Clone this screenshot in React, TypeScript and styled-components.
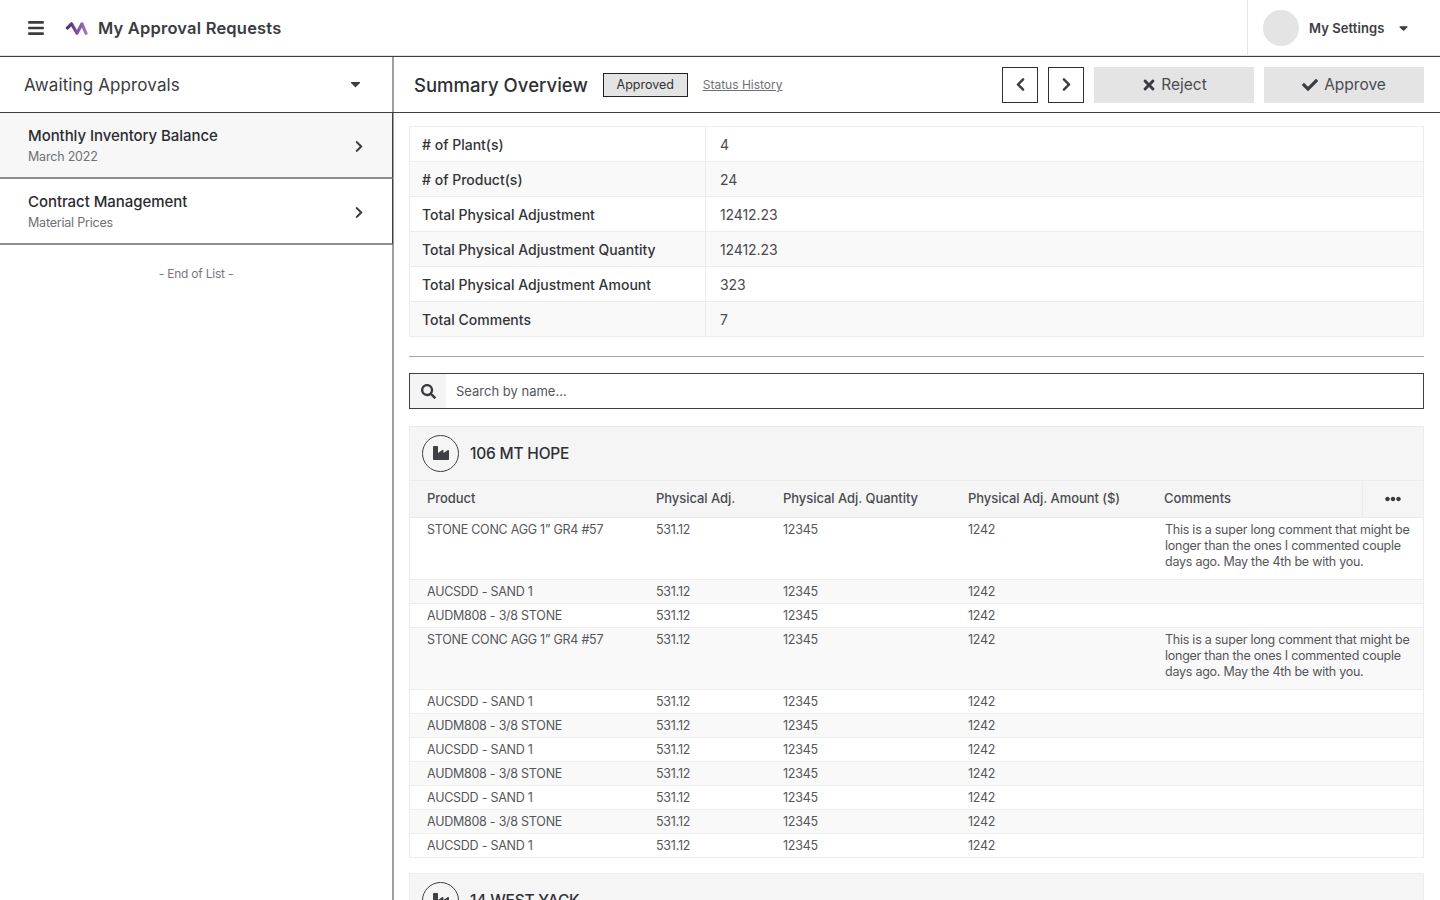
import React from "react";
import styled, { createGlobalStyle } from "styled-components";
import { FaBars, FaCaretDown, FaChevronLeft, FaChevronRight, FaTimes, FaCheck, FaSearch, FaIndustry, FaEllipsisH } from "react-icons/fa";

const Global = createGlobalStyle`
  html, body { margin: 0; padding: 0; height: 100%; overflow: hidden; background: #fff; }
  body { font-family: "Inter", "Open Sans", sans-serif; color: #3b3c42; font-variant-numeric: proportional-nums; }
  * { box-sizing: border-box; }
`;

const Page = styled.div`
  width: 1440px; height: 900px; display: flex; flex-direction: column; overflow: hidden;
`;
const TopBar = styled.header`
  height: 57px; flex: none; display: flex; align-items: center; border-bottom: 1px solid #3f4046;
  box-shadow: inset 0 -1px 0 #e2e2e2;
`;
const MenuButton = styled.div`
  width: 28px; margin-left: 28px; display: flex; color: #3b3c42; font-size: 16px;
  svg { width: 16px; height: 18px; }
`;
const Logo = styled.svg`
  width: 23px; height: 15px; margin-left: 9px; flex: none;
`;
const AppTitle = styled.h1`
  margin: 0 0 0 10px; font-size: 16.5px; font-weight: 600; color: #3b3c42; flex: 1; letter-spacing: 0.2px;
`;
const Settings = styled.div`
  width: 193px; height: 56px; display: flex; align-items: center; padding-left: 15px;
  border-left: 1px solid #e6e6e6; font-size: 13px; font-weight: 600; color: #3b3c42; letter-spacing: 0.08px;
`;
const Avatar = styled.div`
  width: 36px; height: 36px; border-radius: 50%; background: #e4e4e4; margin-right: 10px;
`;
const SmallCaret = styled.span`
  display: flex; margin-left: 14px; svg { width: 11px; height: 14px; }
`;
const Body = styled.div`
  flex: 1; display: flex; min-height: 0;
`;
const Sidebar = styled.aside`
  width: 394px; flex: none; border-right: 2px solid #a0a0a0;
`;
const SideHeader = styled.div`
  height: 56px; display: flex; align-items: center; justify-content: space-between; padding: 0 32px 0 24px;
  border-bottom: 1px solid #3f4046; font-size: 17px; font-weight: 400; color: #3b3c42; letter-spacing: 0.12px;
  margin-right: -2px;
  svg { width: 13px; height: 16px; margin-top: -2px; }
`;
const SideItem = styled.div<{ $active?: boolean }>`
  height: 66px; padding: 0 28px; display: flex; align-items: center; justify-content: space-between;
  background: ${(p) => (p.$active ? "#f7f7f7" : "#fff")};
  border-bottom: 2px solid #8e8e8e; border-right: 1px solid #3f4046; margin-right: -1px;
  svg { width: 10px; height: 13px; color: #3b3c42; margin-top: 2px; }
`;
const ItemTitle = styled.div`
  font-size: 15px; font-weight: 500; color: #2b2c30; letter-spacing: -0.06px; line-height: 20px; margin-top: 1px;
`;
const ItemSub = styled.div`
  font-size: 12.5px; color: #707074; margin-top: 2px; line-height: 18px; letter-spacing: -0.2px;
`;
const EndOfList = styled.div`
  text-align: center; font-size: 12px; color: #77777b; margin-top: 21px; line-height: 16px; letter-spacing: -0.22px;
`;
const Main = styled.main`
  flex: 1; min-width: 0; display: flex; flex-direction: column;
`;
const Toolbar = styled.div`
  height: 56px; flex: none; display: flex; align-items: center; padding: 0 16px 0 20px;
  border-bottom: 1px solid #3f4046;
`;
const ToolTitle = styled.h2`
  margin: 0; font-size: 18.5px; font-weight: 500; color: #2f3035; letter-spacing: 0.02px;
`;
const StatusBadge = styled.div`
  width: 85px; height: 24px; margin-left: 15px; border: 1px solid #222; background: #e4e4e4;
  display: flex; align-items: center; justify-content: center; font-size: 12.5px; color: #333;
`;
const HistoryLink = styled.a`
  margin-left: 15px; font-size: 12px; color: #707074; text-decoration: underline; flex: 1;
`;
const NavButton = styled.div`
  width: 36px; height: 36px; border: 1px solid #2f3035; display: flex; align-items: center; justify-content: center;
  margin-right: 10px; color: #3b3c42;
  svg { width: 11px; height: 15px; margin-left: 1px; }
`;
const ActionButton = styled.div<{ $gap: number }>`
  width: 160px; height: 36px; background: #e4e4e4; display: flex; align-items: center; justify-content: center;
  gap: ${(p) => p.$gap}px; font-size: 15.5px; color: #4a4b50;
  & + & { margin-left: 10px; }
  svg { color: #3b3c42; width: 16px; height: 16px; }
`;
const Content = styled.div`
  flex: 1; min-height: 0; overflow: hidden; padding: 13px 16px 0 15px;
`;
const SummaryTable = styled.div`
  border: 1px solid #ececec; border-bottom: 0;
`;
const SummaryRow = styled.div<{ $shade?: boolean }>`
  height: 35px; display: flex; align-items: center; border-bottom: 1px solid #ececec; font-size: 14px;
  background: ${(p) => (p.$shade ? "#f9f9f9" : "#fff")};
`;
const SummaryLabel = styled.div`
  width: 296px; height: 100%; display: flex; align-items: center; padding-left: 12px; border-right: 1px solid #ececec;
  font-weight: 500; color: #333438;
`;
const SummaryValue = styled.div`
  padding-left: 14px; color: #4a4b50; letter-spacing: -0.1px;
`;
const Divider = styled.hr`
  margin: 19px 0 16px; border: 0; border-top: 1px solid #a8a8a8;
`;
const SearchBox = styled.div`
  height: 36px; border: 1px solid #3f4046; display: flex; align-items: stretch; margin-bottom: 17px;
`;
const SearchIcon = styled.div`
  width: 36px; background: #f4f4f4; display: flex; align-items: center; justify-content: center;
  svg { width: 15px; height: 15px; color: #3b3c42; }
`;
const SearchText = styled.div`
  padding-left: 10px; display: flex; align-items: center; font-size: 13px; color: #55565a;
`;
const Card = styled.section`
  border: 1px solid #ececec; margin-bottom: 15px;
`;
const CardHeader = styled.div`
  height: 54px; background: #f5f5f5; display: flex; align-items: center; padding-left: 12px;
  border-bottom: 1px solid #ececec;
`;
const PlantIcon = styled.div`
  width: 37px; height: 37px; border: 1px solid #3f4046; border-radius: 50%; display: flex; align-items: center; justify-content: center;
  svg { width: 16px; height: 16px; color: #3f4046; margin-top: -1px; }
`;
const PlantName = styled.div`
  margin-left: 11px; font-size: 15.5px; font-weight: 500; color: #2f3035; letter-spacing: -0.2px;
`;
const columns = "229px 127px 185px 196px 1fr";
const HeadRow = styled.div`
  height: 37px; display: grid; grid-template-columns: ${columns}; align-items: center; padding: 0 0 2px 17px;
  background: #f5f5f5; border-bottom: 1px solid #ececec; font-size: 13px; font-weight: 500; color: #4a4b50; letter-spacing: -0.05px;
`;
const CommentHead = styled.div`
  display: flex; height: 36px; margin-bottom: -2px; align-items: center; justify-content: space-between;
`;
const CommentLabel = styled.span`
  margin-top: -2px;
`;
const MoreCell = styled.div`
  width: 61px; height: 100%; display: flex; align-items: center; justify-content: center; border-left: 1px solid #ececec;
  svg { width: 16px; height: 16px; color: #3b3c42; }
`;
const Row = styled.div<{ $shade?: boolean; $tall?: boolean }>`
  display: grid; grid-template-columns: ${columns}; padding-left: 17px; padding-top: 4px;
  height: ${(p) => (p.$tall ? "62px" : "24px")};
  background: ${(p) => (p.$shade ? "#f9f9f9" : "#fff")};
  border-bottom: 1px solid #ececec; font-size: 12.5px; line-height: 16px; color: #55565a; letter-spacing: -0.25px;
  &:last-child { border-bottom: 0; height: 23px; }
`;
const Comment = styled.div`
  padding-left: 1px; padding-right: 4px;
`;

const summary: [string, string][] = [
  ["# of Plant(s)", "4"],
  ["# of Product(s)", "24"],
  ["Total Physical Adjustment", "12412.23"],
  ["Total Physical Adjustment Quantity", "12412.23"],
  ["Total Physical Adjustment Amount", "323"],
  ["Total Comments", "7"],
];
const longComment = "This is a super long comment that might be longer than the ones I commented couple days ago. May the 4th be with you.";
const STONE = "STONE CONC AGG 1” GR4 #57";
const SAND = "AUCSDD - SAND 1";
const AUDM = "AUDM808 - 3/8 STONE";
const rows = [STONE, SAND, AUDM, STONE, SAND, AUDM, SAND, AUDM, SAND, AUDM, SAND];

export default function App() {
  return (
    <Page>
      <Global />
      <TopBar>
        <MenuButton><FaBars /></MenuButton>
        <Logo viewBox="0 0 23 15">
          <defs>
            <linearGradient id="lg" x1="0" x2="1" y1="0" y2="0">
              <stop offset="0" stopColor="#4b2a78" />
              <stop offset="1" stopColor="#a874bc" />
            </linearGradient>
          </defs>
          <path d="M1.5 8 L6.5 2.8 L12 12.2 L17 2.8 L21.5 13.5" fill="none" stroke="url(#lg)" strokeWidth="3.2" strokeLinejoin="round" />
        </Logo>
        <AppTitle>My Approval Requests</AppTitle>
        <Settings>
          <Avatar />
          My Settings
          <SmallCaret><FaCaretDown /></SmallCaret>
        </Settings>
      </TopBar>
      <Body>
        <Sidebar>
          <SideHeader>Awaiting Approvals<FaCaretDown /></SideHeader>
          <SideItem $active>
            <div><ItemTitle>Monthly Inventory Balance</ItemTitle><ItemSub>March 2022</ItemSub></div>
            <FaChevronRight />
          </SideItem>
          <SideItem>
            <div><ItemTitle>Contract Management</ItemTitle><ItemSub>Material Prices</ItemSub></div>
            <FaChevronRight />
          </SideItem>
          <EndOfList>- End of List -</EndOfList>
        </Sidebar>
        <Main>
          <Toolbar>
            <ToolTitle>Summary Overview</ToolTitle>
            <StatusBadge>Approved</StatusBadge>
            <HistoryLink>Status History</HistoryLink>
            <NavButton><FaChevronLeft /></NavButton>
            <NavButton><FaChevronRight /></NavButton>
            <ActionButton $gap={4}><FaTimes />Reject</ActionButton>
            <ActionButton $gap={6}><FaCheck />Approve</ActionButton>
          </Toolbar>
          <Content>
            <SummaryTable>
              {summary.map(([k, v], i) => (
                <SummaryRow key={k} $shade={i % 2 === 1}>
                  <SummaryLabel>{k}</SummaryLabel>
                  <SummaryValue>{v}</SummaryValue>
                </SummaryRow>
              ))}
            </SummaryTable>
            <Divider />
            <SearchBox>
              <SearchIcon><FaSearch /></SearchIcon>
              <SearchText>Search by name...</SearchText>
            </SearchBox>
            <Card>
              <CardHeader>
                <PlantIcon><FaIndustry /></PlantIcon>
                <PlantName>106 MT HOPE</PlantName>
              </CardHeader>
              <HeadRow>
                <div>Product</div>
                <div>Physical Adj.</div>
                <div>Physical Adj. Quantity</div>
                <div>Physical Adj. Amount ($)</div>
                <CommentHead><CommentLabel>Comments</CommentLabel><MoreCell><FaEllipsisH /></MoreCell></CommentHead>
              </HeadRow>
              {rows.map((name, i) => (
                <Row key={i} $shade={i % 2 === 1} $tall={name === STONE}>
                  <div>{name}</div>
                  <div>531.12</div>
                  <div>12345</div>
                  <div>1242</div>
                  <Comment>{name === STONE ? longComment : ""}</Comment>
                </Row>
              ))}
            </Card>
            <Card>
              <CardHeader>
                <PlantIcon><FaIndustry /></PlantIcon>
                <PlantName>14 WEST YACK</PlantName>
              </CardHeader>
            </Card>
          </Content>
        </Main>
      </Body>
    </Page>
  );
}
